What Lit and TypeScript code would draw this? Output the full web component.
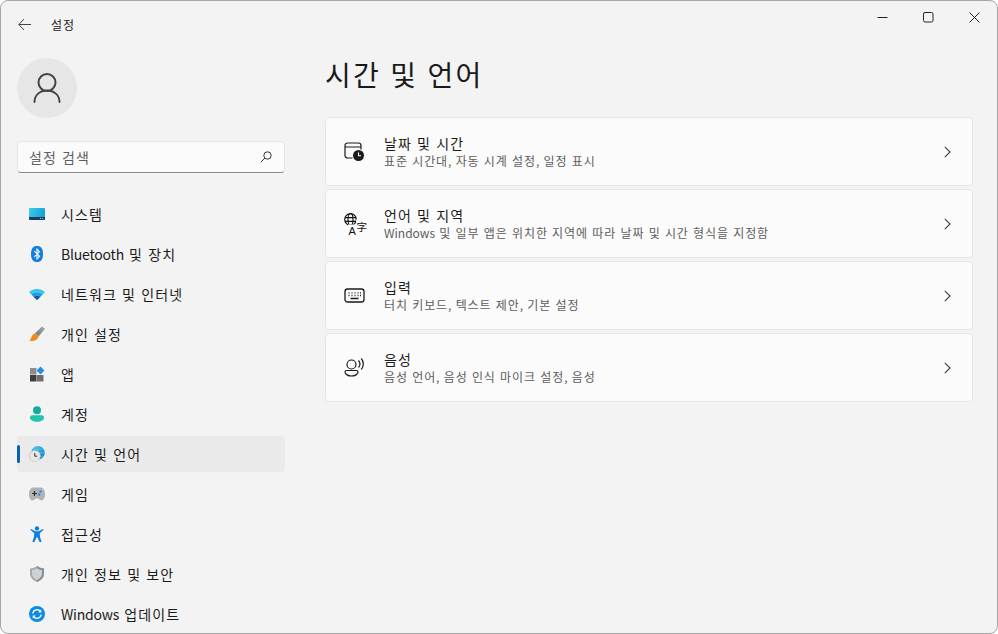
import { LitElement, html, css, svg } from "lit";
import { customElement } from "lit/decorators.js";

const navIcons: Record<string, unknown> = {
  system: svg`<defs><linearGradient id="sys" x1="0" y1="0" x2="1" y2="0.3"><stop offset="0" stop-color="#3fd0e8"/><stop offset="1" stop-color="#1aa0d8"/></linearGradient></defs>
    <rect x="0" y="2" width="16" height="12" rx="1" fill="url(#sys)"/><path d="M0 11h16v2a1 1 0 0 1-1 1H1a1 1 0 0 1-1-1z" fill="#15435f"/><rect x="11" y="12" width="1" height="1" fill="#8fc4d8"/><rect x="13" y="12" width="1" height="1" fill="#8fc4d8"/>`,
  bt: svg`<path d="M8 0c4 0 6 2.500 6 8s-2 8-6 8-6-2.500-6-8 2-8 6-8z" fill="#0f7fe6"/><path d="M5.300 5.200 10.500 10.200 8 12.800V3.200l2.500 2.600-5.200 5" fill="none" stroke="#fff" stroke-width="1.100"/>`,
  wifi: svg`<path d="M0 6.200C2 4 5 3 8 3s6 1 8 3.200l-2.400 2.400C12 7 10 6.300 8 6.300S4 7 2.400 8.600z" fill="#38c6f0"/><path d="M2.400 8.600C4 7 6 6.300 8 6.300s4 .7 5.600 2.300l-2.300 2.300C10.400 10 9.200 9.500 8 9.500s-2.400.5-3.300 1.400z" fill="#1b9fe0"/><path d="M4.700 10.900C5.600 10 6.800 9.500 8 9.500s2.400.5 3.300 1.400L8 14.200z" fill="#0d5fa8"/>`,
  brush: svg`<defs><linearGradient id="hd" x1="1" y1="0" x2="0" y2="1"><stop offset="0" stop-color="#a9adb0"/><stop offset="1" stop-color="#6f7478"/></linearGradient></defs>
    <path d="M13 .4 16 2.800 9.500 10.500 6 7.200z" fill="url(#hd)"/><path d="M6 7.200 9.500 10.500C9 13.500 6 15.500 .5 15 2.200 13.400 2 9 6 7.200z" fill="#f08a1c"/>`,
  apps: svg`<rect x="1" y="2" width="6.500" height="6.500" fill="#8d8d8d"/><rect x="1" y="9" width="6.500" height="6.500" fill="#3f3f3f"/><rect x="8" y="9" width="6.500" height="6.500" fill="#6e6e6e"/><path d="M11.500 0.600 15.400 4.500 11.500 8.400 7.600 4.500z" fill="#1e90e6"/>`,
  account: svg`<circle cx="8" cy="4.200" r="4" fill="#17a99c"/><path d="M1 11.500c0-1.400 1-2.300 2.400-2.300h9.200c1.400 0 2.400.9 2.400 2.300 0 2.600-3 4.200-7 4.200s-7-1.600-7-4.200z" fill="#1fc3ae"/>`,
  time: svg`<defs><linearGradient id="gl" x1="0" y1="0" x2="1" y2="1"><stop offset="0" stop-color="#45c8ea"/><stop offset="1" stop-color="#1478c8"/></linearGradient></defs>
    <circle cx="9" cy="6.800" r="6.800" fill="url(#gl)"/><path d="M9 0v13.600M2.200 6.800h13.600M4 2.600c3 1.600 7 1.600 10 0M4 11c3-1.600 7-1.600 10 0" stroke="#7fd6ef" stroke-width=".5" fill="none"/>
    <circle cx="5.800" cy="10" r="5.600" fill="#e6e6e6" stroke="#b8b8b8" stroke-width=".5"/><path d="M5.800 7v3.200h2.400" stroke="#333" stroke-width="1" fill="none"/>`,
  game: svg`<path d="M4.500 1.500h7c2.500 0 4.500 2.500 4.500 6.500 0 4-1.500 6.500-3.500 6.500-1.500 0-2.300-2-4-2H7.500c-1.700 0-2.500 2-4 2C1.500 14.500 0 12 0 8c0-4 2-6.500 4.500-6.500z" fill="#b0b4b8"/><path d="M3 7.500h5M5.500 5v5" stroke="#2e2e2e" stroke-width="1.200"/><rect x="10.500" y="4.500" width="2" height="2" fill="#1e7fe0"/><rect x="9.200" y="7.500" width="2" height="2" fill="#1e7fe0"/>`,
  access: svg`<circle cx="8" cy="2.400" r="2.200" fill="#0f7fe0"/><path d="M1.300 3.800 2 3l4.500 2.200h3L14 3l.7.800-4 3.400.4 3.800 1.500 5h-2.100L8.200 11H7.800l-2.300 5H3.400l1.500-5 .4-3.800z" fill="#0f7fe0"/>`,
  shield: svg`<path d="M8 0c2 1.600 4.300 2.400 7 2.600v5c0 4-3 7-7 8.400C4 14.600 1 11.600 1 7.600v-5C3.700 2.400 6 1.600 8 0z" fill="#a4aaaf"/><path d="M8 0c2 1.600 4.300 2.400 7 2.600v5c0 4-3 7-7 8.400z" fill="#878d93"/><path d="M8 2.200c1.600 1.100 3.200 1.700 5 1.900v3.500c0 2.900-2 5.100-5 6.300-3-1.200-5-3.400-5-6.300V4.100c1.800-.2 3.400-.8 5-1.900z" fill="#cfd2d5"/>`,
  update: svg`<circle cx="8" cy="8" r="8" fill="#0f8be0"/><path d="M3.800 7.300A4.300 4.300 0 0 1 11.500 5.500M12.200 8.700A4.300 4.300 0 0 1 4.500 10.500" fill="none" stroke="#fff" stroke-width="1.300"/><path d="M12.300 3.600v3h-3zM3.700 12.400v-3h3z" fill="#fff"/>`,
};

const cardIcons: Record<string, unknown> = {
  date: svg`<path d="M8.500 17H3.500A2.500 2.500 0 0 1 1 14.500v-10A2.500 2.500 0 0 1 3.500 2h11A2.500 2.500 0 0 1 17 4.500v4M1 6h16" fill="none" stroke="#1a1a1a" stroke-width="1.200"/><circle cx="14.500" cy="14.500" r="5.500" fill="#1a1a1a"/><path d="M14.500 11.500v3.300h2.500" fill="none" stroke="#fff" stroke-width="1.100"/>`,
  lang: svg`<circle cx="6.500" cy="6.500" r="5.800" fill="none" stroke="#111" stroke-width="1.200"/><ellipse cx="6.500" cy="6.500" rx="2.500" ry="5.800" fill="none" stroke="#111" stroke-width="1.100"/><path d="M1 4.600h11M1 8.400h11" stroke="#111" stroke-width="1.100"/><rect x="4" y="11.500" width="9" height="10" fill="#fbfbfb"/><rect x="12" y="6.500" width="11" height="13" fill="#fbfbfb"/><text x="4.500" y="21.500" font-size="11" font-family="Liberation Sans, sans-serif" fill="#111">A</text><text x="12.500" y="18" font-size="10.500" font-family="Noto Sans CJK SC, sans-serif" fill="#111">字</text>`,
  keyboard: svg`<rect x="1" y="4" width="19" height="13" rx="2.500" fill="none" stroke="#1a1a1a" stroke-width="1.300"/><path d="M4.500 7.800h1M7.500 7.800h1M10.500 7.800h1M13.500 7.800h1M16 7.800h1M4.500 10.500h1M7.500 10.500h1M10.500 10.500h1M13.500 10.500h1M16 10.500h1M6.500 13.500h8" stroke="#1a1a1a" stroke-width="1.300" fill="none"/>`,
  voice: svg`<circle cx="7.500" cy="7.500" r="4.500" fill="none" stroke="#1a1a1a" stroke-width="1.200"/><path d="M1 15c0-1 .6-1.500 1.500-1.500h10c.9 0 1.500.5 1.500 1.500 0 2.300-3 4-6.500 4S1 17.300 1 15z" fill="none" stroke="#1a1a1a" stroke-width="1.200"/><path d="M14.500 3.500c1.700 2 1.700 5 0 7M17.200 1.500c2.800 3 2.800 8 0 11" fill="none" stroke="#1a1a1a" stroke-width="1.200"/>`,
};

const NAV = [
  ["system", "시스템"],
  ["bt", "Bluetooth 및 장치"],
  ["wifi", "네트워크 및 인터넷"],
  ["brush", "개인 설정"],
  ["apps", "앱"],
  ["account", "계정"],
  ["time", "시간 및 언어"],
  ["game", "게임"],
  ["access", "접근성"],
  ["shield", "개인 정보 및 보안"],
  ["update", "Windows 업데이트"],
];

const CARDS = [
  ["date", "날짜 및 시간", "표준 시간대, 자동 시계 설정, 일정 표시"],
  ["lang", "언어 및 지역", "Windows 및 일부 앱은 위치한 지역에 따라 날짜 및 시간 형식을 지정함"],
  ["keyboard", "입력", "터치 키보드, 텍스트 제안, 기본 설정"],
  ["voice", "음성", "음성 언어, 음성 인식 마이크 설정, 음성"],
];

/** Hangul runs are set wider than Latin runs and commas, as in the reference's system font. */
const txt = (s: string) =>
  s.split(/([A-Za-z]+|,)/).map((p, i) =>
    i % 2
      ? html`<span class=${p === "," ? "comma" : "latin"}>${p}</span>`
      : html`<span class="ko">${p}</span>`
  );

@customElement("app-root")
export class AppRoot extends LitElement {
  static styles = css`
    :host {
      display: block;
      width: 998px;
      height: 634px;
      background: #fff;
      font-family: "Noto Sans CJK KR", "Noto Sans", sans-serif;
      color: #1b1b1b;
    }
    .ko { letter-spacing: 0.08em; word-spacing: 0.06em; }
    .latin { letter-spacing: -0.015em; }
    .comma { letter-spacing: 0; }
    .window {
      box-sizing: border-box;
      width: 998px;
      height: 634px;
      background: #f3f3f3;
      border: 1px solid #a6a6a6;
      border-radius: 8px;
      overflow: hidden;
      display: grid;
      grid-template-columns: 324px 1fr;
      grid-template-rows: 1fr;
      position: relative;
    }
    .side {
      display: flex;
      flex-direction: column;
      padding: 0 0 0 16px;
      min-width: 0;
    }
    .titlebar {
      display: flex;
      align-items: center;
      height: 46px;
      padding-bottom: 1px;
      font-size: 12px;
    }
    .back { width: 13px; height: 13px; margin-left: 1px; margin-right: 20px; display: block; }
    .avatar {
      width: 60px;
      height: 60px;
      border-radius: 50%;
      background: #e6e6e6;
      margin-top: 10px;
      display: flex;
      align-items: center;
      justify-content: center;
    }
    .search {
      box-sizing: border-box;
      width: 268px;
      height: 32px;
      margin-top: 23px;
      background: #fbfbfb;
      border: 1px solid #e5e5e5;
      border-bottom-color: #8a8a8a;
      border-radius: 4px;
      display: flex;
      align-items: center;
      justify-content: space-between;
      padding: 0 12px 0 11px;
      font-size: 14px;
      color: #5f5f5f;
    }
    nav {
      display: flex;
      flex-direction: column;
      gap: 4px;
      margin-top: 23px;
    }
    .item {
      position: relative;
      box-sizing: border-box;
      width: 268px;
      height: 36px;
      border-radius: 4px;
      display: flex;
      align-items: center;
      gap: 16px;
      padding-left: 12px;
      font-size: 14px;
    }
    .item.on { background: #eaeaea; }
    .item.on::before {
      content: "";
      position: absolute;
      left: 0;
      top: 9px;
      width: 3px;
      height: 18px;
      border-radius: 2px;
      background: #0b5fb8;
    }
    .item svg { width: 16px; height: 16px; flex: none; display: block; overflow: visible; margin-top: -1px; }
    main {
      position: relative;
      display: flex;
      flex-direction: column;
      min-width: 0;
    }
    .controls {
      position: absolute;
      top: 0;
      right: 0;
      display: flex;
    }
    .ctl { width: 46px; height: 32px; display: flex; align-items: center; justify-content: center; }
    .ctl svg { width: 11px; height: 11px; display: block; }
    h1 {
      margin: 50px 0 0 0;
      font-size: 28px;
      font-weight: 400;
      line-height: 46px;
      color: #1a1a1a;
    }
    h1 .ko { word-spacing: 0.025em; }
    .cards {
      display: flex;
      flex-direction: column;
      gap: 3px;
      margin-top: 20px;
    }
    .card {
      box-sizing: border-box;
      width: 648px;
      height: 69px;
      background: #fbfbfb;
      border: 1px solid #e6e6e6;
      border-radius: 4px;
      display: flex;
      align-items: center;
      padding-left: 18px;
    }
    .card .ic { width: 21px; height: 21px; flex: none; display: block; overflow: visible; }
    .txt { margin-left: 19px; flex: 1; display: flex; flex-direction: column; }
    .t { font-size: 14px; line-height: 18px; }
    .s { font-size: 12px; line-height: 16px; color: #5d5d5d; margin-top: 1px; }
    .s .ko { letter-spacing: 0.075em; }
    .s .latin { letter-spacing: 0; }
    .chev { width: 7px; height: 12px; margin-right: 21px; display: block; }
  `;

  render() {
    return html`<div class="window">
      <div class="side">
        <div class="titlebar">
          <svg class="back" viewBox="0 0 13 13"><path d="M6 1 .8 6.500 6 12M1 6.500h12" fill="none" stroke="#444" stroke-width="1"/></svg>
          <span>${txt("설정")}</span>
        </div>
        <div class="avatar">
          <svg width="28" height="30" viewBox="0 0 28 30"><circle cx="14" cy="9.500" r="8.500" fill="none" stroke="#444" stroke-width="2"/><path d="M1.500 29C1.500 22 7 17.500 14 17.500S26.500 22 26.500 29" fill="none" stroke="#444" stroke-width="2" stroke-linecap="round"/></svg>
        </div>
        <div class="search">
          <span>${txt("설정 검색")}</span>
          <svg width="12" height="12" viewBox="0 0 12 12"><circle cx="7.500" cy="4.500" r="3.700" fill="none" stroke="#333" stroke-width="1"/><path d="M4.800 7.200 .8 11.200" stroke="#333" stroke-width="1"/></svg>
        </div>
        <nav>
          ${NAV.map(
            ([k, l]) => html`<div class="item ${k === "time" ? "on" : ""}">
              <svg viewBox="0 0 16 16">${navIcons[k]}</svg><span>${txt(l)}</span>
            </div>`
          )}
        </nav>
      </div>
      <main>
        <div class="controls">
          <div class="ctl"><svg viewBox="0 0 11 11"><path d="M.500 5.500h10" stroke="#222" stroke-width="1"/></svg></div>
          <div class="ctl"><svg viewBox="0 0 11 11"><rect x=".500" y=".500" width="9.500" height="9.500" rx="1.500" fill="none" stroke="#222" stroke-width="1"/></svg></div>
          <div class="ctl"><svg viewBox="0 0 11 11"><path d="M.500 .500l10 10M10.500 .500l-10 10" stroke="#222" stroke-width="1"/></svg></div>
        </div>
        <h1>${txt("시간 및 언어")}</h1>
        <div class="cards">
          ${CARDS.map(
            ([k, t, s]) => html`<div class="card">
              <svg class="ic" viewBox="0 0 21 21">${cardIcons[k]}</svg>
              <div class="txt"><span class="t">${txt(t)}</span><span class="s">${txt(s)}</span></div>
              <svg class="chev" viewBox="0 0 7 12"><path d="M.800 .800 6 6 .800 11.200" fill="none" stroke="#444" stroke-width="1.200"/></svg>
            </div>`
          )}
        </div>
      </main>
    </div>`;
  }
}
